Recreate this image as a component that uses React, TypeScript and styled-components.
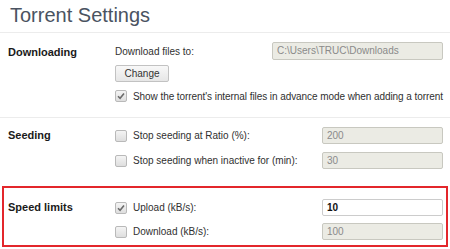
import React from 'react';
import styled, { createGlobalStyle } from 'styled-components';

const GlobalStyle = createGlobalStyle`
  html, body {
    margin: 0;
    padding: 0;
    background: #ffffff;
  }
  body {
    font-family: "Liberation Sans", Arial, sans-serif;
    font-size: 10px;
    color: #303030;
  }
`;

// Layout
const Page = styled.div`
  width: 450px;
  height: 249px;
  overflow: hidden;
  background: #fff;
`;

const Title = styled.h1`
  margin: 0;
  height: 33px;
  padding-left: 10px;
  box-sizing: border-box;
  font-size: 20px;
  font-weight: normal;
  line-height: 31px;
  color: #4a5361;
  border-bottom: 1px solid #ececec;
`;

const Section = styled.section<{ highlight?: boolean; height: number; last?: boolean }>`
  display: grid;
  grid-template-columns: 107px 328px;
  box-sizing: border-box;
  height: ${p => p.height}px;
  padding: ${p => (p.highlight ? '11px 0 0 4px' : '9px 0 0 8px')};
  margin-left: ${p => (p.highlight ? '2px' : '0')};
  width: ${p => (p.highlight ? '446px' : '450px')};
  border: ${p => (p.highlight ? '2px solid #e3262b' : 'none')};
  ${p => !p.highlight && !p.last && 'border-bottom: 1px solid #ececec;'}
`;

const Heading = styled.div<{ offset?: number }>`
  font-weight: bold;
  font-size: 11px;
  color: #1a1a1a;
  line-height: 17px;
  padding-top: ${p => p.offset ?? 0}px;
`;

const Controls = styled.div<{ gap?: number }>`
  display: flex;
  flex-direction: column;
  align-items: flex-start;
  gap: ${p => p.gap ?? 7}px;
`;

const Row = styled.div`
  display: flex;
  align-items: center;
  justify-content: space-between;
  align-self: stretch;
`;

const CheckLabel = styled.label<{ spaced?: boolean; tight?: boolean }>`
  display: flex;
  align-items: center;
  gap: 6px;
  color: #303030;
  white-space: nowrap;
  margin-top: ${p => (p.spaced ? 3 : 0)}px;
  letter-spacing: ${p => (p.tight ? '-0.07px' : 'normal')};
`;

const Box = styled.span`
  display: inline-flex;
  align-items: center;
  justify-content: center;
  width: 12px;
  height: 12px;
  box-sizing: border-box;
  border: 1px solid #b9b9b9;
  border-radius: 2px;
  background: linear-gradient(#f4f4f4, #dedede);
`;

const TextInput = styled.div<{ width: number; disabled?: boolean; tall?: boolean }>`
  width: ${p => p.width}px;
  height: ${p => (p.tall ? 18 : 17)}px;
  box-sizing: border-box;
  border: 1px solid ${p => (p.disabled ? '#c8c8c0' : '#cccccc')};
  border-radius: 2px;
  background: ${p => (p.disabled ? '#ebebe4' : '#ffffff')};
  color: ${p => (p.disabled ? '#8a8a8a' : '#111')};
  font-weight: ${p => (p.disabled ? 'normal' : 'bold')};
  padding-left: 4px;
  line-height: ${p => (p.tall ? 16 : 15)}px;
  white-space: nowrap;
`;

const Button = styled.div`
  width: 54px;
  height: 17px;
  box-sizing: border-box;
  border: 1px solid #c2c2c2;
  border-radius: 2px;
  background: linear-gradient(#f8f8f8, #e6e6e6);
  text-align: center;
  line-height: 15px;
  color: #333;
`;

const Check = ({ checked }: { checked?: boolean }) => (
  <Box>
    {checked && (
      <svg width="8" height="8" viewBox="0 0 8 8">
        <path d="M1 4.2 L3.1 6.3 L7 1.6" fill="none" stroke="#6b6b6b" strokeWidth="1.6" />
      </svg>
    )}
  </Box>
);

export default function App() {
  return (
    <Page>
      <GlobalStyle />
      <Title>Torrent Settings</Title>

      <Section height={85}>
        <Heading offset={2}>Downloading</Heading>
        <Controls gap={5}>
          <Row>
            <span>Download files to:</span>
            <TextInput width={171} disabled tall>C:\Users\TRUC\Downloads</TextInput>
          </Row>
          <Button>Change</Button>
          <CheckLabel spaced tight>
            <Check checked />
            Show the torrent's internal files in advance mode when adding a torrent
          </CheckLabel>
        </Controls>
      </Section>

      <Section height={68} last>
        <Heading>Seeding</Heading>
        <Controls gap={8}>
          <Row>
            <CheckLabel>
              <Check />
              Stop seeding at Ratio (%):
            </CheckLabel>
            <TextInput width={121} disabled>200</TextInput>
          </Row>
          <Row>
            <CheckLabel>
              <Check />
              Stop seeding when inactive for (min):
            </CheckLabel>
            <TextInput width={121} disabled>30</TextInput>
          </Row>
        </Controls>
      </Section>

      <Section height={61} highlight>
        <Heading>Speed limits</Heading>
        <Controls gap={7}>
          <Row>
            <CheckLabel>
              <Check checked />
              Upload (kB/s):
            </CheckLabel>
            <TextInput width={121}>10</TextInput>
          </Row>
          <Row>
            <CheckLabel>
              <Check />
              Download (kB/s):
            </CheckLabel>
            <TextInput width={121} disabled>100</TextInput>
          </Row>
        </Controls>
      </Section>
    </Page>
  );
}
